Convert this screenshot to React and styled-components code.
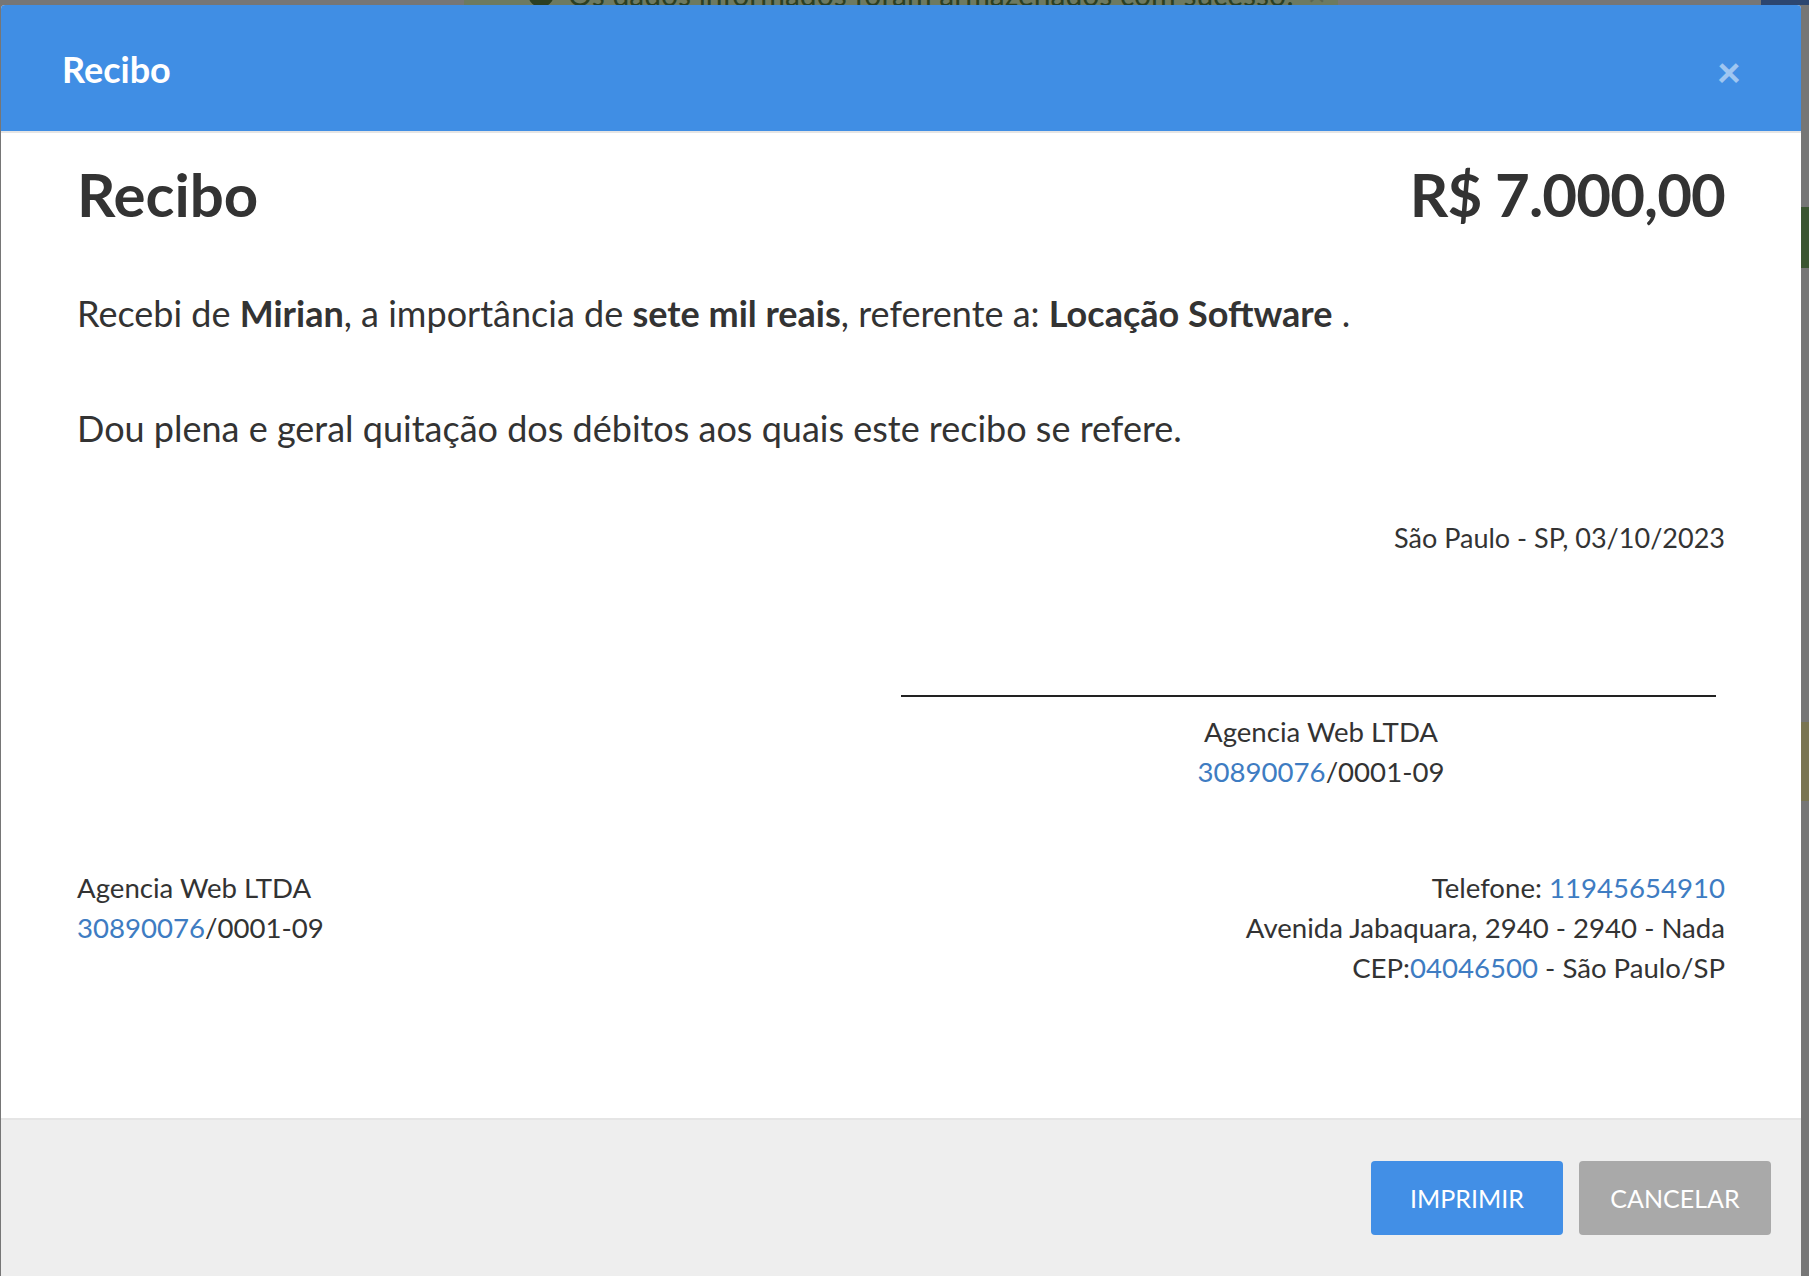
import React from 'react';
import styled, { createGlobalStyle } from 'styled-components';

const GlobalStyle = createGlobalStyle`
  html, body {
    margin: 0;
    padding: 0;
    background: #767676;
    font-family: Lato, "Open Sans", sans-serif;
    color: #333;
  }
  * { box-sizing: border-box; }
`;

const Backdrop = styled.div`
  position: relative;
  height: 1276px;
  overflow: hidden;
  padding: 5px 8px 0 1px;
  background: #767676;
`;

const Toast = styled.div`
  position: absolute;
  top: -29px;
  left: 464px;
  width: 874px;
  height: 46px;
  display: flex;
  align-items: center;
  gap: 14px;
  padding: 0 40px 0 64px;
  background: #6d7a60;
  color: #2b3f22;
  font-size: 30px;
  line-height: 1;
  white-space: nowrap;
`;

const ToastCheck = styled.span`
  flex: none;
  width: 26px;
  height: 26px;
  border-radius: 50%;
  background: #2b3f22;
`;

const ToastClose = styled.span`
  margin-left: auto;
  color: #5a6650;
`;

const CornerPatch = styled.div`
  position: absolute;
  top: 0;
  right: 0;
  width: 48px;
  height: 5px;
  background: #2c4670;
`;

const SideBand = styled.div`
  position: absolute;
  right: 0;
  width: 8px;
  top: ${({ $top }) => $top}px;
  height: ${({ $h }) => $h}px;
  background: ${({ $color }) => $color};
`;

const Modal = styled.div`
  position: relative;
  z-index: 1;
  background: #fff;
  border-radius: 4px 4px 0 0;
  overflow: hidden;
  display: flex;
  flex-direction: column;
`;

const Header = styled.div`
  height: 128px;
  padding: 0 60px 0 61px;
  background: #408ee4;
  border-bottom: 2px solid #e5e5e5;
  display: flex;
  align-items: center;
  justify-content: space-between;
`;

const HeaderTitle = styled.h4`
  margin: 2px 0 0;
  color: #fff;
  font-size: 36px;
  font-weight: 700;
  line-height: 1;
`;

const CloseButton = styled.button`
  border: 0;
  background: transparent;
  padding: 0;
  margin-top: 6px;
  color: rgba(255, 255, 255, 0.5);
  font-family: Lato, sans-serif;
  font-size: 42px;
  font-weight: 900;
  line-height: 1;
  cursor: pointer;
`;

const Body = styled.div`
  padding: 28px 76px 0 76px;
  height: 985px;
  display: flex;
  flex-direction: column;
`;

const TitleRow = styled.div`
  display: flex;
  justify-content: space-between;
  align-items: baseline;
`;

const BigTitle = styled.h1`
  margin: 0;
  font-size: 60px;
  line-height: 66px;
  font-weight: 700;
  letter-spacing: ${({ $tight }) => ($tight ? '-0.9px' : '0')};
  color: #333;
`;

const Paragraph = styled.p`
  margin: ${({ $mt }) => $mt}px 0 0;
  font-size: 36px;
  line-height: ${({ $lh }) => $lh}px;
  color: #333;

  b {
    font-weight: 700;
  }
`;

const DateLine = styled.div`
  margin-top: 64px;
  text-align: right;
  font-size: 27px;
  line-height: 40px;
`;

const SignatureBlock = styled.div`
  margin: 137px 0 0 50%;
  display: flex;
  flex-direction: column;
`;

const SignatureLine = styled.div`
  width: 815px;
  border-top: 2px solid #222;
`;

const SignatureText = styled.div`
  margin-top: 15px;
  padding-left: 16px;
  text-align: center;
  font-size: 27.6px;
  line-height: 40px;
`;

const InfoRow = styled.div`
  margin-top: 76px;
  display: flex;
  justify-content: space-between;
  font-size: 27.6px;
  line-height: 40px;
`;

const InfoColumn = styled.div`
  text-align: ${({ $align }) => $align || 'left'};
`;

const Link = styled.a`
  color: #3e7cc2;
  text-decoration: none;
`;

const Footer = styled.div`
  border-top: 2px solid #e5e5e5;
  background: #eeeeee;
  height: 180px;
  padding: 41px 30px 0 0;
  display: flex;
  justify-content: flex-end;
  align-items: flex-start;
  gap: 16px;
`;

const FooterButton = styled.button`
  width: 192px;
  height: 74px;
  border: 0;
  border-radius: 4px;
  background: ${({ $variant }) => ($variant === 'primary' ? '#428fe6' : '#a9a9a9')};
  color: #fff;
  font-family: Lato, sans-serif;
  font-size: 25px;
  text-transform: uppercase;
  cursor: pointer;
`;

const App = () => {
  return (
    <>
      <GlobalStyle />
      <Backdrop>
        <Toast>
          <ToastCheck />
          Os dados informados foram armazenados com sucesso!
          <ToastClose>×</ToastClose>
        </Toast>
        <CornerPatch />
        <SideBand $top={207} $h={61} $color="#3b5631" />
        <SideBand $top={722} $h={79} $color="#7a7552" />

        <Modal>
          <Header>
            <HeaderTitle>Recibo</HeaderTitle>
            <CloseButton aria-label="Fechar">×</CloseButton>
          </Header>

          <Body>
            <TitleRow>
              <BigTitle>Recibo</BigTitle>
              <BigTitle $tight>R$ 7.000,00</BigTitle>
            </TitleRow>

            <Paragraph $mt={62} $lh={48}>
              Recebi de <b>Mirian</b>, a importância de <b>sete mil reais</b>, referente a: <b>Locação Software</b> .
            </Paragraph>
            <Paragraph $mt={65} $lh={52}>
              Dou plena e geral quitação dos débitos aos quais este recibo se refere.
            </Paragraph>

            <DateLine>São Paulo - SP, 03/10/2023</DateLine>

            <SignatureBlock>
              <SignatureLine />
              <SignatureText>
                Agencia Web LTDA
                <br />
                <Link href="#">30890076</Link>/0001-09
              </SignatureText>
            </SignatureBlock>

            <InfoRow>
              <InfoColumn>
                Agencia Web LTDA
                <br />
                <Link href="#">30890076</Link>/0001-09
              </InfoColumn>
              <InfoColumn $align="right">
                Telefone: <Link href="#">11945654910</Link>
                <br />
                Avenida Jabaquara, 2940 - 2940 - Nada
                <br />
                CEP:<Link href="#">04046500</Link> - São Paulo/SP
              </InfoColumn>
            </InfoRow>
          </Body>

          <Footer>
            <FooterButton $variant="primary">Imprimir</FooterButton>
            <FooterButton>Cancelar</FooterButton>
          </Footer>
        </Modal>
      </Backdrop>
    </>
  );
};

export default App;
